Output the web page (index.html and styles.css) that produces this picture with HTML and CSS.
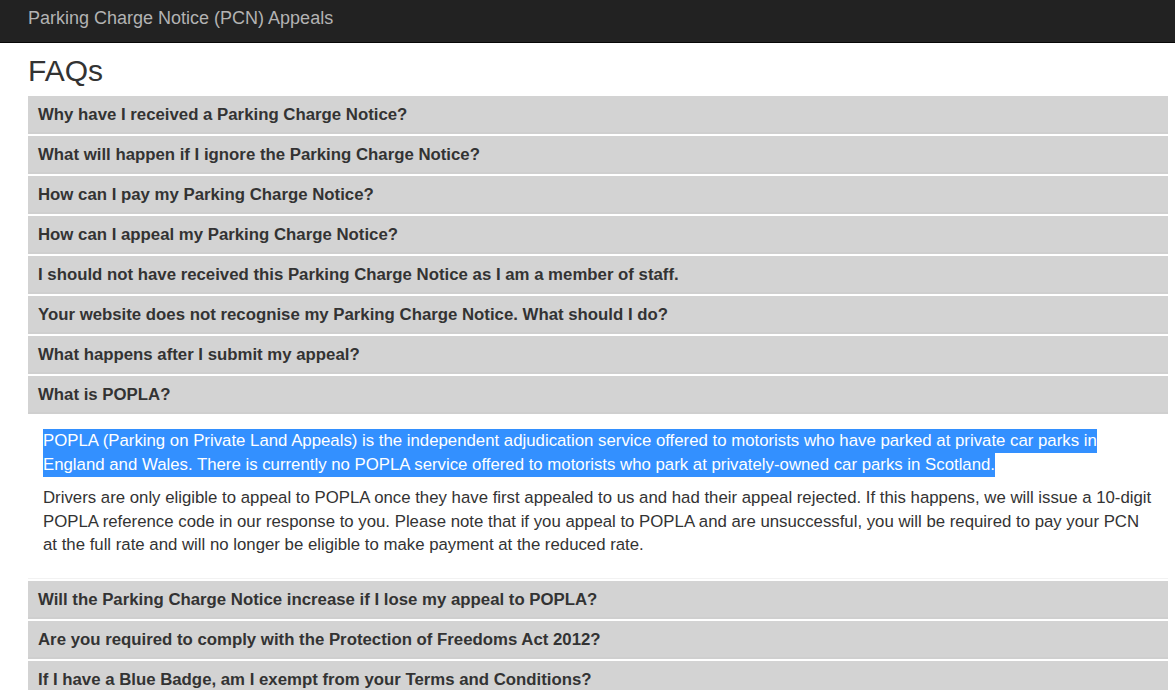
FILE: index.html
```html
<!DOCTYPE html>
<html lang="en">
  <head>
    <meta charset="UTF-8" />
    <meta name="viewport" content="width=device-width, initial-scale=1.0" />
    <link rel="stylesheet" href="styles.css">
    <title>FAQs - Parking Charge Notice (PCN) Appeals</title>
  </head>
  <body>
    <nav class="navbar">
      <a class="brand" href="#">Parking Charge Notice (PCN) Appeals</a>
    </nav>

    <div class="container">
      <h1>FAQs</h1>

      <div class="faq">
        <div class="question">Why have I received a Parking Charge Notice?</div>
      </div>
      <div class="faq">
        <div class="question">What will happen if I ignore the Parking Charge Notice?</div>
      </div>
      <div class="faq">
        <div class="question">How can I pay my Parking Charge Notice?</div>
      </div>
      <div class="faq">
        <div class="question">How can I appeal my Parking Charge Notice?</div>
      </div>
      <div class="faq">
        <div class="question">I should not have received this Parking Charge Notice as I am a member of staff.</div>
      </div>
      <div class="faq">
        <div class="question">Your website does not recognise my Parking Charge Notice. What should I do?</div>
      </div>
      <div class="faq">
        <div class="question">What happens after I submit my appeal?</div>
      </div>
      <div class="faq open">
        <div class="question">What is POPLA?</div>
        <div class="answer">
          <p><span class="selected">POPLA (Parking on Private Land Appeals) is the independent adjudication service offered to motorists who have parked at private car parks in England and Wales. There is currently no POPLA service offered to motorists who park at privately-owned car parks in Scotland.</span></p>
          <p>Drivers are only eligible to appeal to POPLA once they have first appealed to us and had their appeal rejected. If this happens, we will issue a 10-digit POPLA reference code in our response to you. Please note that if you appeal to POPLA and are unsuccessful, you will be required to pay your PCN at the full rate and will no longer be eligible to make payment at the reduced rate.</p>
        </div>
      </div>
      <div class="faq">
        <div class="question">Will the Parking Charge Notice increase if I lose my appeal to POPLA?</div>
      </div>
      <div class="faq">
        <div class="question">Are you required to comply with the Protection of Freedoms Act 2012?</div>
      </div>
      <div class="faq">
        <div class="question">If I have a Blue Badge, am I exempt from your Terms and Conditions?</div>
      </div>
    </div>
  </body>
</html>
```

FILE: styles.css
```css
body {
  margin: 0;
  background-color: #fff;
  color: #333;
  font-family: "Liberation Sans", Arial, sans-serif;
  font-size: 16.8px;
  line-height: 23.5px;
}
.navbar {
  height: 42px;
  background-color: #222;
  border-bottom: 1px solid #080808;
  padding: 0 28px;
  display: flex;
  align-items: center;
}
.navbar .brand {
  color: #b3b3b3;
  font-size: 18px;
  text-decoration: none;
  margin-top: -5px;
}
.container {
  width: 1140px;
  margin-left: 28px;
}
h1 {
  font-size: 30px;
  font-weight: normal;
  line-height: 36px;
  margin: 10px 0 7px;
}
.faq {
  margin-bottom: 2px;
}
.faq .question {
  height: 38px;
  box-sizing: border-box;
  padding: 7px 10px;
  background-color: #d3d3d3;
  border-bottom: 2px solid #cfcfcf;
  font-weight: bold;
}
.faq .answer {
  padding: 15px 15px 11px;
  border-bottom: 1px solid #f2f2f2;
}
.faq .answer p {
  margin: 0 0 10px;
}
.selected {
  background-color: #3390ff;
  color: #fff;
  padding: 2px 0 3px;
}
```
